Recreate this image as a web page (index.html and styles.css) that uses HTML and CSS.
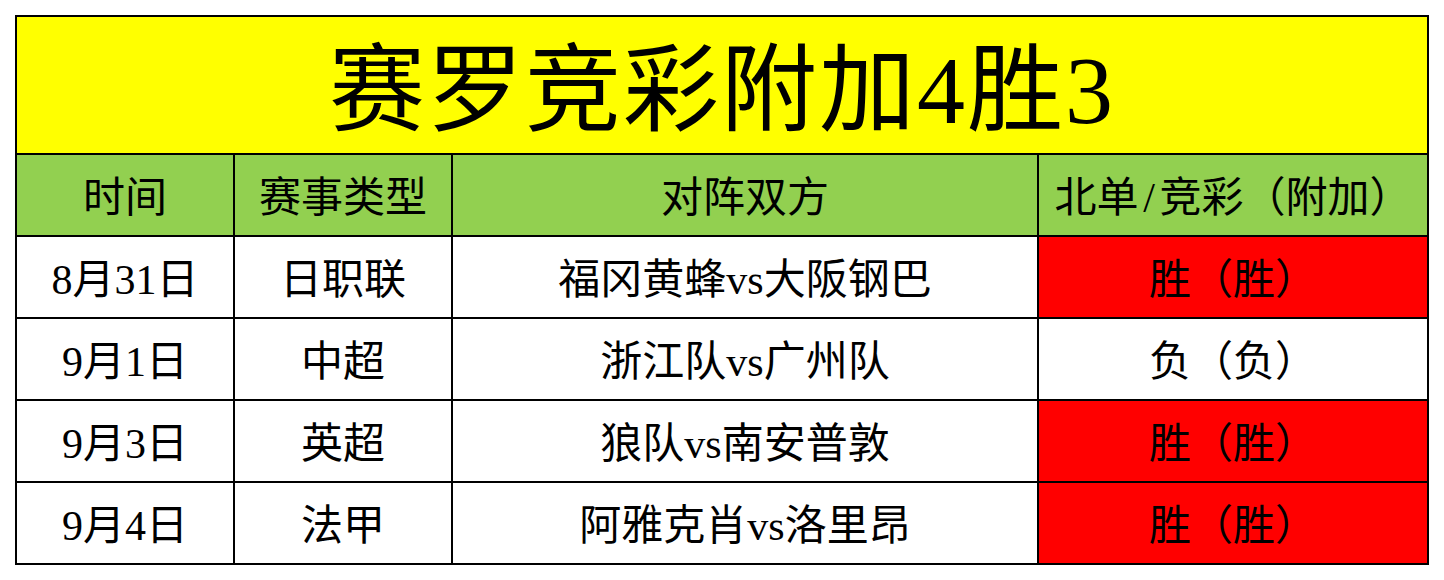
FILE: index.html
```html
<!DOCTYPE html>
<html lang="zh-CN">
<head>
<meta charset="utf-8">
<link rel="stylesheet" href="styles.css">
</head>
<body>
<div class="sheet">
  <div class="title">赛罗竞彩附加4胜3</div>
  <div class="cell head">时间</div>
  <div class="cell head">赛事类型</div>
  <div class="cell head">对阵双方</div>
  <div class="cell head">北单<span class="slash">/</span>竞彩（附加）</div>

  <div class="cell">8月31日</div>
  <div class="cell">日职联</div>
  <div class="cell">福冈黄蜂vs大阪钢巴</div>
  <div class="cell win">胜（胜）</div>

  <div class="cell">9月1日</div>
  <div class="cell">中超</div>
  <div class="cell">浙江队vs广州队</div>
  <div class="cell">负（负）</div>

  <div class="cell">9月3日</div>
  <div class="cell">英超</div>
  <div class="cell">狼队vs南安普敦</div>
  <div class="cell win">胜（胜）</div>

  <div class="cell">9月4日</div>
  <div class="cell">法甲</div>
  <div class="cell">阿雅克肖vs洛里昂</div>
  <div class="cell win">胜（胜）</div>
</div>
</body>
</html>
```
FILE: styles.css
```css
html, body {
  margin: 0;
  background: #ffffff;
}
body {
  padding: 15px;
}
.sheet {
  width: 1410px;
  padding: 2px;
  background: #000000;
  display: grid;
  grid-template-columns: 216px 216px 584px 388px;
  grid-template-rows: 136px 80px 80px 80px 80px 80px;
  gap: 2px;
  font-family: "Liberation Serif", "Noto Sans CJK SC", serif;
  color: #000000;
}
.title {
  grid-column: 1 / 5;
  background: #ffff00;
  display: flex;
  align-items: center;
  justify-content: center;
  font-size: 96px;
  line-height: 1;
  padding-top: 12px;
  box-sizing: border-box;
  letter-spacing: 2px;
}
.cell {
  background: #ffffff;
  display: flex;
  align-items: center;
  justify-content: center;
  font-size: 42px;
  line-height: 1;
  padding-top: 6px;
  box-sizing: border-box;
  white-space: nowrap;
}
.head {
  background: #92d050;
}
.win {
  background: #ff0000;
}
.slash {
  display: inline-block;
  width: 0.5em;
  text-align: center;
}
```
